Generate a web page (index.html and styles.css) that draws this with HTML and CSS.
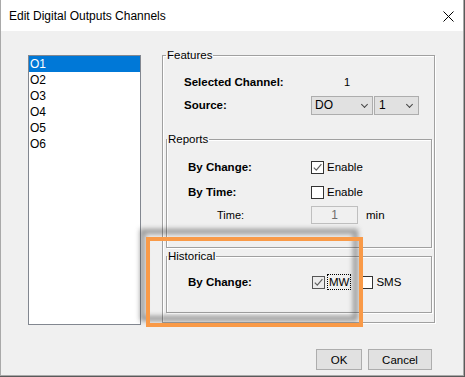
FILE: index.html
```html
<!DOCTYPE html>
<html lang="en">

<head>
	<meta charset="utf-8">
	<title>Edit Digital Outputs Channels</title>
	<link rel="stylesheet" href="styles.css">
</head>

<body>
	<div class="window">
		<header class="titlebar">
			<span>Edit Digital Outputs Channels</span>
			<svg class="close" width="11" height="11" viewBox="0 0 11 11">
				<path d="M0.5 0.5 L10.5 10.5 M10.5 0.5 L0.5 10.5" stroke="#000" stroke-width="1" fill="none"/>
			</svg>
		</header>

		<div class="client">
			<main class="main">
				<ul class="listbox">
					<li class="selected">O1</li>
					<li>O2</li>
					<li>O3</li>
					<li>O4</li>
					<li>O5</li>
					<li>O6</li>
				</ul>

				<fieldset class="group features">
					<legend>Features</legend>
					<div class="row">
						<b class="lbl">Selected Channel:</b>
						<span class="value">1</span>
					</div>
					<div class="row">
						<b class="lbl">Source:</b>
						<span class="combo combo-do">DO<i class="chev"></i></span>
						<span class="combo combo-num">1<i class="chev"></i></span>
					</div>

					<fieldset class="group reports">
						<legend>Reports</legend>
						<div class="row">
							<b class="lbl">By Change:</b>
							<span class="check checked"></span>
							<span class="cap">Enable</span>
						</div>
						<div class="row">
							<b class="lbl">By Time:</b>
							<span class="check"></span>
							<span class="cap">Enable</span>
						</div>
						<div class="row">
							<span class="lbl sub">Time:</span>
							<span class="field">1</span>
							<span class="unit">min</span>
						</div>
					</fieldset>

					<fieldset class="group historical">
						<legend>Historical</legend>
						<div class="row">
							<b class="lbl">By Change:</b>
							<span class="check checked pressed"></span>
							<span class="cap focus">MW</span>
							<span class="check sms"></span>
							<span class="cap">SMS</span>
						</div>
					</fieldset>
				</fieldset>
			</main>

			<footer class="buttons">
				<button type="button" class="btn ok">OK</button>
				<button type="button" class="btn cancel">Cancel</button>
			</footer>
		</div>

		<!-- annotation drawn over the screenshot -->
		<div class="mark-shadow"></div>
		<div class="mark"></div>
	</div>
</body>

</html>
```

FILE: styles.css
```css
*,
*::before,
*::after {
	box-sizing: border-box;
}

html,
body {
	margin: 0;
	background: #5a5a5a;
}

body {
	font-family: "Liberation Sans", Arial, sans-serif;
	font-size: 11px;
	color: #000;
}

.window {
	position: relative;
	width: 464px;
	height: 376px;
	background: #f0f0f0;
	border: 1px solid #a9a9a9;
	border-top: 0;
	overflow: hidden;
}

.titlebar {
	display: flex;
	align-items: center;
	justify-content: space-between;
	height: 31px;
	padding: 0 9px 0 8px;
	background: #fff;
	font-size: 12px;

	.close {
		display: block;
		margin-top: 1px;
	}
}

.main {
	display: flex;
	align-items: flex-start;
	height: 294px;
	padding-left: 27px;
}

.listbox {
	width: 113px;
	height: 270px;
	margin: 24px 0 0;
	padding: 0;
	list-style: none;
	background: #fff;
	border: 1px solid #828790;

	li {
		height: 16px;
		line-height: 16px;
		padding-left: 1px;
		font-size: 12px;
	}

	.selected {
		background: #0078d7;
		color: #fff;
	}
}

/* etched group box */
.group {
	margin: 0;
	min-width: 0;
	border: 1px solid #a0a0a0;
	box-shadow: inset 1px 1px 0 #fff, 1px 1px 0 #fff;

	legend {
		padding: 0 1px;
		line-height: 14px;
		font-size: 11.5px;
	}
}

.features {
	width: 273px;
	height: 275px;
	margin: 17px 0 0 21px;
	padding: 11px 2px 0 3px;

	> .row {
		padding-left: 18px;

		.lbl {
			width: 127px;
		}
	}

	> .row + .row {
		margin-top: 5px;
	}
}

.reports {
	height: 116px;
	margin-top: 18px;
	padding: 12px 0 0;

	.row + .row {
		margin-top: 7px;
	}

	.row:last-child {
		margin-top: 5px;
	}
}

.historical {
	height: 64px;
	margin-top: 1px;
	padding: 10px 0 0;
}

.reports .row,
.historical .row {
	padding-left: 21px;

	.lbl {
		width: 123px;
	}
}

.historical .row .lbl {
	width: 124px;
}

.row {
	display: flex;
	align-items: center;
	height: 18px;

	.lbl {
		flex: none;
	}

	b.lbl {
		font-size: 11.5px;
	}

	.sub {
		padding-left: 29px;
	}
}

.value {
	padding-left: 33px;
}

.combo {
	position: relative;
	display: flex;
	align-items: center;
	height: 19px;
	padding-left: 3px;
	background: #e1e1e1;
	border: 1px solid #adadad;
	font-size: 12px;
}

.combo-do {
	width: 62px;
}

.combo-num {
	width: 45px;
	margin-left: 1px;
	padding-left: 4px;
}

.chev {
	position: absolute;
	right: 5px;
	top: 5px;
	width: 5px;
	height: 5px;
	border-right: 1px solid #444;
	border-bottom: 1px solid #444;
	transform: rotate(45deg);
}

.combo-num .chev {
	right: 6px;
}

.check {
	position: relative;
	flex: none;
	width: 13px;
	height: 13px;
	background: #fff;
	border: 1px solid #333;
}

.check.checked::after {
	content: "";
	position: absolute;
	left: 1px;
	top: 1px;
	width: 9px;
	height: 9px;
	background: no-repeat center / 9px 9px url("data:image/svg+xml,%3Csvg xmlns='http://www.w3.org/2000/svg' viewBox='0 0 9 9'%3E%3Cpath d='M0.8 4.6 L3.3 7.1 L8.4 1.2' fill='none' stroke='%23606060' stroke-width='1.2'/%3E%3C/svg%3E");
}

.check.pressed {
	background: #ececec;
	border-color: #555;
}

.cap {
	margin-left: 3px;
	font-size: 11.5px;
}

.focus {
	padding: 1px 1px;
	outline: 1px dotted #000;
	outline-offset: 0;
	margin-left: 3px;
}

.check.sms {
	margin-left: 10px;
}

.field {
	width: 47px;
	height: 18px;
	line-height: 16px;
	text-align: center;
	color: #6d6d6d;
	border: 1px solid #bfbfbf;
	font-size: 12px;
}

.unit {
	margin-left: 8px;
	font-size: 11.5px;
}

.buttons {
	display: flex;
	justify-content: flex-end;
	gap: 6px;
	margin-top: 24px;
	padding-right: 31px;
}

.btn {
	height: 21px;
	padding: 0;
	background: #e1e1e1;
	border: 1px solid #adadad;
	font: 11.5px "Liberation Sans", Arial, sans-serif;
	color: #000;
}

.ok {
	width: 46px;
}

.cancel {
	width: 64px;
}

.mark-shadow {
	position: absolute;
	left: 139px;
	top: 229px;
	width: 218px;
	height: 92px;
	border: 5px solid rgba(40, 40, 40, 0.45);
	filter: blur(2.5px);
}

.mark {
	position: absolute;
	left: 145px;
	top: 237px;
	width: 217px;
	height: 90px;
	border: 4px solid #f99a48;
}
```
